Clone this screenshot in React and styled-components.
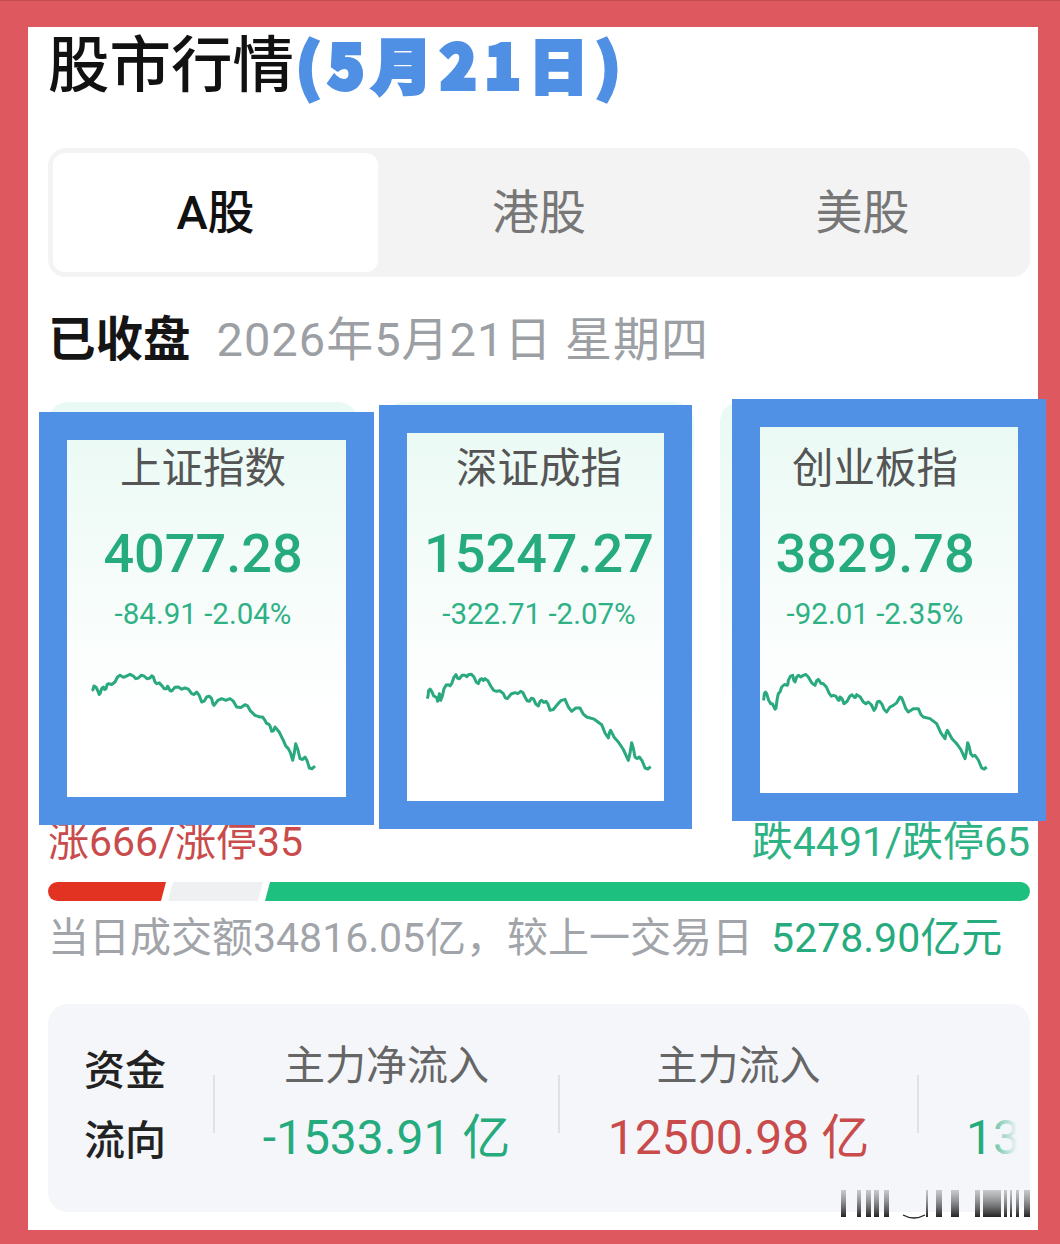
import React from 'react';
import styled, { createGlobalStyle } from 'styled-components';

const FONT = '"Roboto", "Noto Sans CJK SC", sans-serif';
const GREEN = '#25ab7d';
const RED = '#c94b4b';

const GlobalStyle = createGlobalStyle`
    html, body {
        margin: 0;
        padding: 0;
        background: #dd585f;
    }
    * {
        box-sizing: border-box;
    }
`;

const Page = styled.div`
    width: 1060px;
    height: 1244px;
    padding: 26px 22px 14px 28px;
    border-top: 1px solid #c24a52;
    background: #dd585f;
    font-family: ${FONT};
    overflow: hidden;
`;
const Sheet = styled.div`
    position: relative;
    height: 1203px;
    padding: 0 8px 0 20px;
    background: #fff;
`;
const Heading = styled.div`
    display: flex;
    align-items: center;
    height: 72px;
    margin-bottom: 49px;
    padding-top: 6px;
`;
const HeadingText = styled.div`
    font-size: 61.5px;
    line-height: 66px;
    font-weight: 500;
    color: #111;
`;
const HeadingDate = styled.div`
    margin: -6px 0 0 3px;
    font-family: "Noto Sans CJK SC", sans-serif;
    font-size: 58px;
    line-height: 66px;
    font-weight: 700;
    letter-spacing: 10px;
    color: #4f90e4;
    -webkit-text-stroke: 6px #4f90e4;
    stroke-linejoin: round;
    white-space: nowrap;
`;
const Tabs = styled.div`
    display: grid;
    grid-template-columns: 325px 322px 1fr;
    height: 129px;
    padding: 5px;
    border-radius: 18px;
    background: #f3f3f3;
`;
const Tab = styled.div`
    display: flex;
    align-items: center;
    justify-content: center;
    padding-bottom: 8px;
    border-radius: 12px;
    background: ${props => (props.$active ? '#fff' : 'transparent')};
    color: ${props => (props.$active ? '#111' : '#777')};
    font-size: 47px;
    font-weight: ${props => (props.$active ? 500 : 400)};
`;
const Status = styled.div`
    display: flex;
    align-items: center;
    gap: 26px;
    height: 60px;
    margin-top: 31px;
    margin-bottom: 34px;
    padding: 0 0 6px 0;
`;
const StatusLabel = styled.div`
    font-size: 47.5px;
    font-weight: 700;
    color: #151515;
`;
const StatusDate = styled.div`
    font-size: 47px;
    letter-spacing: 1px;
    color: #9c9fa4;
`;
const Cards = styled.div`
    display: flex;
    justify-content: space-between;
    height: 418px;
`;
const Card = styled.div`
    position: relative;
    width: 310px;
    padding-top: 41px;
    border-radius: 20px 20px 0 0;
    background: linear-gradient(#e9f9f3, #fff 76%);
    text-align: center;
`;
const CardName = styled.div`
    height: 52px;
    font-size: 41.5px;
    line-height: 52px;
    color: #555;
`;
const CardValue = styled.div`
    height: 64px;
    margin-top: 27px;
    font-size: 54px;
    line-height: 64px;
    font-weight: 500;
    color: ${GREEN};
`;
const CardChange = styled.div`
    height: 36px;
    margin-top: 10px;
    font-size: 29.5px;
    line-height: 36px;
    color: #2fb186;
`;
const Spark = styled.svg`
    display: block;
    width: 310px;
    height: 120px;
    margin-top: 30px;
`;
// blue marker frame drawn over a card
const Marker = styled.div`
    position: absolute;
    left: ${props => props.$left}px;
    top: ${props => props.$top}px;
    width: ${props => props.$width}px;
    height: ${props => props.$height}px;
    border: 28px solid #5090e5;
    pointer-events: none;
`;
const Counts = styled.div`
    display: flex;
    justify-content: space-between;
    align-items: center;
    height: 42px;
    padding-top: 2px;
    font-size: 41px;
    line-height: 40px;
`;
const Count = styled.div`
    color: ${props => props.$color};
    white-space: nowrap;
`;
const Bar = styled.div`
    display: flex;
    height: 19px;
    margin-top: 20px;
    gap: 2px;
`;
const Segment = styled.div`
    width: ${props => props.$width}px;
    flex: ${props => (props.$grow ? 1 : 'none')};
    background: ${props => props.$color};
    border-radius: ${props => props.$radius};
    clip-path: ${props => props.$clip};
`;
const Turnover = styled.div`
    display: flex;
    align-items: center;
    height: 46px;
    margin-top: 10px;
    font-size: 41px;
    color: #a1a4a9;
    white-space: nowrap;
`;
const TurnoverValue = styled.span`
    margin-left: 18px;
    color: ${GREEN};
`;
const Flow = styled.div`
    position: relative;
    display: flex;
    align-items: center;
    height: 208px;
    margin-top: 47px;
    padding-bottom: 8px;
    border-radius: 20px;
    background: #f4f6fa;
    overflow: hidden;
`;
const FlowTitle = styled.div`
    flex: none;
    width: 165px;
    margin-top: 3px;
    padding-left: 36px;
    font-size: 41px;
    line-height: 70px;
    font-weight: 500;
    color: #222;
`;
const FlowColumn = styled.div`
    flex: none;
    width: ${props => props.$width}px;
    margin-top: -3px;
    padding-left: ${props => props.$indent || 0}px;
    text-align: ${props => (props.$indent ? 'left' : 'center')};
    white-space: nowrap;
`;
const FlowLabel = styled.div`
    height: 60px;
    margin-left: ${props => props.$shift || 0}px;
    font-size: 41px;
    line-height: 60px;
    color: #666;
`;
const FlowValue = styled.div`
    height: 62px;
    margin-top: 11px;
    font-size: 48px;
    line-height: 62px;
    color: ${props => props.$color};
`;
const Divider = styled.div`
    flex: none;
    width: 2px;
    height: 58px;
    background: #dfe1e5;
`;
const Fade = styled.div`
    position: absolute;
    top: 0;
    right: 0;
    bottom: 0;
    width: 48px;
    background: linear-gradient(90deg, rgba(244, 246, 250, 0), #f4f6fa 75%);
`;
const Stamp = styled.svg`
    position: absolute;
    right: 2px;
    bottom: 10px;
    width: 195px;
    height: 32px;
`;

// adds small zig-zag points between the hand-placed ones
const roughen = points => {
    const out = [];
    points.forEach((p, i) => {
        out.push(p.join(','));
        const next = points[i + 1];
        if (next) {
            const offset = i % 2 === 0 ? 5 : -5;
            out.push(`${(p[0] + next[0]) / 2},${(p[1] + next[1]) / 2 + offset}`);
        }
    });
    return out.join(' ');
};

const indexes = [
    {
        name: '上证指数',
        value: '4077.28',
        change: '-84.91 -2.04%',
        box: '84 810 930 360',
        marker: { left: -9, top: 10, width: 335, height: 413 },
        line: [[215, 895], [222, 882], [235, 900], [240, 905], [250, 885], [258, 890], [265, 875], [285, 870], [300, 850], [320, 852], [340, 852], [355, 858], [372, 852], [390, 858], [400, 855], [410, 875], [425, 880], [440, 890], [445, 885], [455, 897], [475, 885], [495, 888], [515, 905], [530, 900], [545, 930], [560, 915], [575, 920], [582, 940], [605, 920], [630, 920], [650, 945], [675, 938], [690, 955], [720, 975], [735, 985], [745, 995], [755, 1018], [765, 1005], [790, 1045], [805, 1070], [818, 1105], [827, 1055], [840, 1100], [855, 1095], [868, 1128], [885, 1122]],
    },
    {
        name: '深证成指',
        value: '15247.27',
        change: '-322.71 -2.07%',
        box: '42 60 930 360',
        marker: { left: -5, top: 3, width: 313, height: 424 },
        line: [[172, 170], [176, 145], [185, 148], [197, 165], [203, 178], [208, 155], [212, 175], [222, 140], [235, 128], [245, 125], [258, 98], [268, 110], [285, 100], [295, 98], [312, 105], [325, 125], [335, 110], [345, 110], [362, 132], [380, 148], [400, 155], [412, 170], [435, 152], [452, 148], [465, 165], [478, 178], [490, 170], [505, 192], [515, 175], [528, 178], [540, 205], [560, 190], [585, 172], [605, 208], [630, 198], [650, 225], [695, 248], [715, 288], [722, 265], [745, 300], [775, 355], [785, 302], [795, 345], [808, 345], [825, 378], [842, 374]],
    },
    {
        name: '创业板指',
        value: '3829.78',
        change: '-92.01 -2.35%',
        box: '60 810 930 360',
        marker: { left: 12, top: -3, width: 314, height: 422 },
        line: [[190, 925], [193, 905], [200, 905], [212, 935], [222, 945], [228, 948], [235, 905], [245, 885], [262, 880], [265, 865], [278, 850], [285, 870], [295, 850], [310, 850], [325, 855], [345, 880], [355, 862], [370, 875], [388, 905], [400, 910], [415, 925], [420, 915], [432, 935], [450, 912], [462, 915], [470, 908], [490, 930], [505, 930], [522, 955], [532, 930], [545, 935], [560, 960], [580, 940], [600, 915], [610, 930], [625, 960], [655, 950], [670, 975], [710, 995], [735, 1040], [742, 1015], [770, 1055], [795, 1100], [803, 1052], [812, 1085], [825, 1090], [845, 1128], [860, 1125]],
    },
];

const stampBars = [[0, 5], [16, 4], [25, 5], [33, 5], [43, 5], [85, 2], [95, 6], [110, 8], [134, 5], [142, 18], [163, 3], [169, 2], [175, 3], [183, 6]];

const App = () => (
    <Page>
        <GlobalStyle />
        <Sheet>
            <Heading>
                <HeadingText>股市行情</HeadingText>
                <HeadingDate>(5月21日)</HeadingDate>
            </Heading>
            <Tabs>
                <Tab $active>A股</Tab>
                <Tab>港股</Tab>
                <Tab>美股</Tab>
            </Tabs>
            <Status>
                <StatusLabel>已收盘</StatusLabel>
                <StatusDate>2026年5月21日 星期四</StatusDate>
            </Status>
            <Cards>
                {indexes.map(item => (
                    <Card key={item.name}>
                        <CardName>{item.name}</CardName>
                        <CardValue>{item.value}</CardValue>
                        <CardChange>{item.change}</CardChange>
                        <Spark viewBox={item.box}>
                            <polyline points={roughen(item.line)} fill="none" stroke="#2aa97f" strokeWidth="9" strokeLinejoin="round" />
                        </Spark>
                        <Marker $left={item.marker.left} $top={item.marker.top} $width={item.marker.width} $height={item.marker.height} />
                    </Card>
                ))}
            </Cards>
            <Counts>
                <Count $color={RED}>涨666/涨停35</Count>
                <Count $color="#2eb285">跌4491/跌停65</Count>
            </Counts>
            <Bar>
                <Segment $width={118} $color="#e23222" $radius="10px 0 0 10px" $clip="polygon(0 0, 100% 0, calc(100% - 5px) 100%, 0 100%)" />
                <Segment $width={95} $color="#eff0f2" $clip="polygon(5px 0, 100% 0, calc(100% - 5px) 100%, 0 100%)" />
                <Segment $grow $color="#1dc07f" $radius="0 10px 10px 0" $clip="polygon(5px 0, 100% 0, 100% 100%, 0 100%)" />
            </Bar>
            <Turnover>
                当日成交额34816.05亿，较上一交易日
                <TurnoverValue>5278.90亿元</TurnoverValue>
            </Turnover>
            <Flow>
                <FlowTitle>资金<br />流向</FlowTitle>
                <Divider />
                <FlowColumn $width={343}>
                    <FlowLabel>主力净流入</FlowLabel>
                    <FlowValue $color={GREEN}>-1533.91 亿</FlowValue>
                </FlowColumn>
                <Divider />
                <FlowColumn $width={357}>
                    <FlowLabel>主力流入</FlowLabel>
                    <FlowValue $color={RED}>12500.98 亿</FlowValue>
                </FlowColumn>
                <Divider />
                <FlowColumn $width={300} $indent={47}>
                    <FlowLabel $shift={50}>主力流出</FlowLabel>
                    <FlowValue $color={GREEN}>13</FlowValue>
                </FlowColumn>
                <Fade />
            </Flow>
            <Stamp viewBox="0 0 195 32">
                <defs>
                    <linearGradient id="stampInk" x1="0" y1="0" x2="0" y2="1">
                        <stop offset="0" stopColor="#777" stopOpacity="0.35" />
                        <stop offset="1" stopColor="#222" />
                    </linearGradient>
                </defs>
                {stampBars.map(([x, w]) => (
                    <rect key={x} x={x} y="2" width={w} height="27" fill="url(#stampInk)" />
                ))}
                <path d="M62 27 q11 6 22 0" fill="none" stroke="#222" strokeWidth="1.4" />
            </Stamp>
        </Sheet>
    </Page>
);

export default App;
